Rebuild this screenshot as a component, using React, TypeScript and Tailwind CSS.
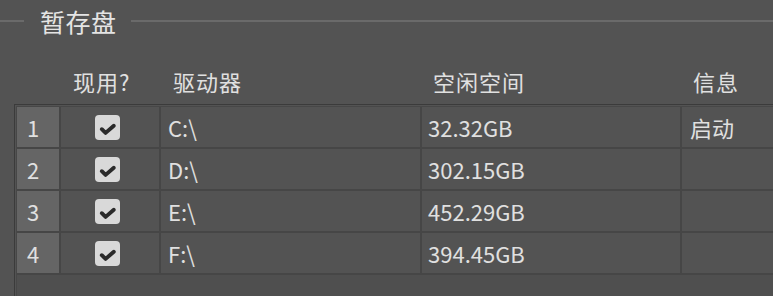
import React from "react";

const rows = [
  { n: "1", drive: "C:\\", free: "32.32GB", info: "启动" },
  { n: "2", drive: "D:\\", free: "302.15GB", info: "" },
  { n: "3", drive: "E:\\", free: "452.29GB", info: "" },
  { n: "4", drive: "F:\\", free: "394.45GB", info: "" },
];

function Check() {
  return (
    <div className="w-[25px] h-[25px] rounded-[4px] bg-[#d9d9d9]">
      <svg width="25" height="25" viewBox="0 0 25 25">
        <path d="M6.8 14.2 L10.6 17.9 L18.8 10.8" fill="none" stroke="#2b2b2b" strokeWidth="3.9" strokeLinecap="round" strokeLinejoin="round" />
      </svg>
    </div>
  );
}

export default function App() {
  return (
    <div
      className="w-[773px] h-[296px] bg-[#535353] overflow-hidden text-[#e0e0e0] flex flex-col"
      style={{ fontFamily: '"Noto Sans CJK SC", "Noto Sans", sans-serif' }}
    >
      <div className="h-[42px] flex items-center shrink-0">
        <div className="w-[24px] h-[2px] bg-[#6a6a6a]" />
        <div className="ml-[16px] mr-[14px] text-[25px] leading-[30px] tracking-[0.5px] text-[#e4e4e4]">暂存盘</div>
        <div className="flex-1 h-[2px] bg-[#6a6a6a]" />
      </div>
      <div className="h-[62px] shrink-0 pl-[17px] grid grid-cols-[42px_98px_259px_258px_1fr] gap-x-[2px] text-[22px] leading-[24px] tracking-[1px]">
        <div />
        <div className="pl-[12px] pt-[27px]">现用?</div>
        <div className="pl-[12px] pt-[27px]">驱动器</div>
        <div className="pl-[11px] pt-[27px]">空闲空间</div>
        <div className="pl-[11px] pt-[27px]">信息</div>
      </div>
      <div className="ml-[14px] flex-1 border-t border-l border-[#3b3b3b] pt-[1px] pl-[1px] flex flex-col">
        <div className="border-t border-l border-[#474747] flex-1 flex flex-col bg-[#4f4f4f]">
          <div className="grid grid-cols-[42px_98px_259px_258px_1fr] auto-rows-[40px] gap-[2px] bg-[#464646] pb-[2px] text-[22px]">
            {rows.map((r) => (
              <React.Fragment key={r.n}>
                <div className="bg-[#656565] flex items-center pl-[10px]">{r.n}</div>
                <div className="bg-[#535353] flex items-center pl-[34px]">
                  <Check />
                </div>
                <div className="bg-[#535353] flex items-center pl-[7px]">{r.drive}</div>
                <div className="bg-[#535353] flex items-center pl-[6px]">{r.free}</div>
                <div className="bg-[#535353] flex items-center pl-[8px]">{r.info}</div>
              </React.Fragment>
            ))}
          </div>
        </div>
      </div>
    </div>
  );
}
